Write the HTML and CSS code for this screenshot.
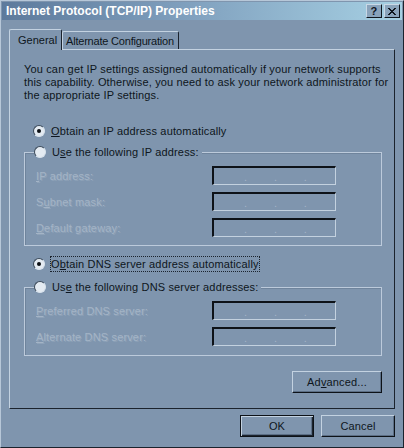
FILE: index.html
```html
<!DOCTYPE html>
<html lang="en">
<head>
    <meta charset="UTF-8">
    <title>Internet Protocol (TCP/IP) Properties</title>
    <link rel="stylesheet" href="styles.css">
</head>
<body>

    <div class="window">
        <div class="titlebar">
            <span class="title">Internet Protocol (TCP/IP) Properties</span>
            <div class="caption-buttons">
                <span class="cap-btn help">?</span>
                <span class="cap-btn close">
                    <svg width="8" height="7" viewBox="0 0 8 7"><path d="M0 0L7 7M1 0L8 7M7 0L0 7M8 0L1 7" stroke="#10161e" stroke-width="1"/></svg>
                </span>
            </div>
        </div>

        <div class="tabs">
            <div class="tab active">General</div>
            <div class="tab">Alternate Configuration</div>
        </div>

        <div class="panel">
            <p class="desc">You can get IP settings assigned automatically if your network supports<br>this capability. Otherwise, you need to ask your network administrator for<br>the appropriate IP settings.</p>

            <div class="radio-row first">
                <span class="radio checked"></span>
                <span><u>O</u>btain an IP address automatically</span>
            </div>

            <div class="group">
                <div class="radio-row group-head">
                    <span class="radio"></span>
                    <span>U<u>s</u>e the following IP address:</span>
                </div>
                <div class="field-row">
                    <span class="label"><u>I</u>P address:</span>
                    <span class="ip-field"><i>.</i><i>.</i><i>.</i></span>
                </div>
                <div class="field-row">
                    <span class="label">S<u>u</u>bnet mask:</span>
                    <span class="ip-field"><i>.</i><i>.</i><i>.</i></span>
                </div>
                <div class="field-row">
                    <span class="label"><u>D</u>efault gateway:</span>
                    <span class="ip-field"><i>.</i><i>.</i><i>.</i></span>
                </div>
            </div>

            <div class="radio-row dns-auto">
                <span class="radio checked"></span>
                <span class="focused">O<u>b</u>tain DNS server address automatically</span>
            </div>

            <div class="group second">
                <div class="radio-row group-head">
                    <span class="radio"></span>
                    <span>Us<u>e</u> the following DNS server addresses:</span>
                </div>
                <div class="field-row">
                    <span class="label"><u>P</u>referred DNS server:</span>
                    <span class="ip-field"><i>.</i><i>.</i><i>.</i></span>
                </div>
                <div class="field-row">
                    <span class="label"><u>A</u>lternate DNS server:</span>
                    <span class="ip-field"><i>.</i><i>.</i><i>.</i></span>
                </div>
            </div>

            <div class="advanced-row">
                <button class="btn advanced">Ad<u>v</u>anced...</button>
            </div>
        </div>

        <div class="dialog-buttons">
            <button class="btn default">OK</button>
            <button class="btn">Cancel</button>
        </div>
    </div>

</body>
</html>
```

FILE: styles.css
```css
body {
    margin: 0;
    background-color: #7f95ae;
    font-family: "Liberation Sans", Arial, sans-serif;
    font-size: 11px;
    letter-spacing: 0.15px;
    color: #0e1620;
}

.window {
    width: 404px;
    height: 448px;
    box-sizing: border-box;
    border: 1px solid;
    border-color: #b7c7d8 #1b232d #1b232d #b7c7d8;
    padding: 1px;
    background-color: #7f95ae;
}

.titlebar {
    height: 18px;
    display: flex;
    align-items: center;
    justify-content: space-between;
    padding: 0 2px 0 4px;
    background: linear-gradient(to right, #5d7a9c, #7f9fbd 45%, #a6d0e3);
}

.title {
    color: #ffffff;
    font-weight: bold;
    font-size: 12px;
    letter-spacing: 0;
}

.caption-buttons {
    display: flex;
    gap: 2px;
}

.cap-btn {
    width: 16px;
    height: 14px;
    box-sizing: border-box;
    display: flex;
    align-items: center;
    justify-content: center;
    background-color: #8aa3bb;
    border: 1px solid;
    border-color: #c9d8e6 #10161e #10161e #c9d8e6;
    font-weight: bold;
    font-size: 11px;
    color: #10161e;
}

.tabs {
    display: flex;
    align-items: flex-end;
    height: 20px;
    margin: 9px 0 0 7px;
    position: relative;
    z-index: 1;
}

.tab {
    height: 18px;
    box-sizing: border-box;
    padding: 2px 3px 0 3px;
    border: 1px solid;
    border-bottom: none;
    border-color: #c3d2e1 #1b232d #1b232d #c3d2e1;
    border-radius: 2px 2px 0 0;
    background-color: #7f95ae;
    line-height: 14px;
    white-space: nowrap;
    letter-spacing: -0.2px;
}

.tab.active {
    width: 53px;
    height: 21px;
    margin-bottom: -1px;
    padding: 3px 0 0 8px;
    letter-spacing: 0;
}

.tab:not(.active) {
    width: 117px;
}

.panel {
    width: 386px;
    height: 360px;
    box-sizing: border-box;
    margin-left: 7px;
    border: 1px solid;
    border-color: #c3d2e1 #1b232d #1b232d #c3d2e1;
    padding: 13px 12px 0 14px;
    display: flex;
    flex-direction: column;
}

.desc {
    margin: 0;
    line-height: 13px;
    white-space: nowrap;
}

.radio-row {
    display: flex;
    align-items: center;
    gap: 6px;
    height: 16px;
    padding-left: 9px;
}

.radio-row.first {
    margin-top: 21px;
}

.radio-row.dns-auto {
    margin-top: 10px;
}

.radio {
    width: 12px;
    height: 12px;
    box-sizing: border-box;
    border-radius: 50%;
    border: 1px solid;
    border-color: #3c4a5a #d8e2ec #d8e2ec #3c4a5a;
    background-color: #e4ebf2;
    display: flex;
    align-items: center;
    justify-content: center;
}

.radio.checked::after {
    content: "";
    width: 4px;
    height: 4px;
    border-radius: 50%;
    background-color: #0b0f14;
}

.focused {
    outline: 1px dotted #1b232d;
    outline-offset: 0;
    padding: 1px 0;
}

.group {
    margin-top: 13px;
    border: 1px solid #bccadb;
    box-shadow: inset 1px 1px 0 #6f849c;
    padding: 0 11px 8px 11px;
}

.group.second {
    margin-top: 15px;
    padding-bottom: 9px;
}

.group-head {
    margin: -9px 0 0 -2px;
    padding: 0 3px 0 0;
    width: fit-content;
    background-color: #7f95ae;
}

.field-row {
    display: grid;
    grid-template-columns: 176px 124px;
    align-items: center;
    height: 19px;
    margin-top: 7px;
}

.group-head + .field-row {
    margin-top: 6px;
}

.label {
    color: #a4b4c6;
    text-shadow: 1px 1px 0 #8ea2b8;
}

.ip-field {
    width: 124px;
    height: 19px;
    box-sizing: border-box;
    border: 1px solid;
    border-width: 2px 1px 1px 2px;
    border-color: #0d1218 #c3d1df #c3d1df #0d1218;
    display: flex;
    padding: 0 28px 0 30px;
    justify-content: space-between;
    align-items: flex-end;
    color: #a4b4c6;
    line-height: 14px;
}

.ip-field i {
    font-style: normal;
}

.advanced-row {
    display: flex;
    justify-content: flex-end;
    margin-top: 15px;
}

.btn {
    width: 74px;
    height: 22px;
    box-sizing: border-box;
    border: 1px solid;
    border-color: #c3d2e1 #0d1218 #0d1218 #c3d2e1;
    box-shadow: inset -1px -1px 0 #5c6f86;
    background-color: #7f95ae;
    font-family: "Liberation Sans", Arial, sans-serif;
    font-size: 11px;
    letter-spacing: 0.15px;
    color: #0e1620;
    padding: 0;
}

.btn.advanced {
    width: 90px;
}

.btn.default {
    border: 1px solid #0d1218;
    box-shadow: inset 1px 1px 0 #c3d2e1, inset -1px -1px 0 #1b232d, inset -2px -2px 0 #5c6f86;
}

.dialog-buttons {
    display: flex;
    justify-content: flex-end;
    gap: 7px;
    margin: 6px 7px 0 0;
}
```
